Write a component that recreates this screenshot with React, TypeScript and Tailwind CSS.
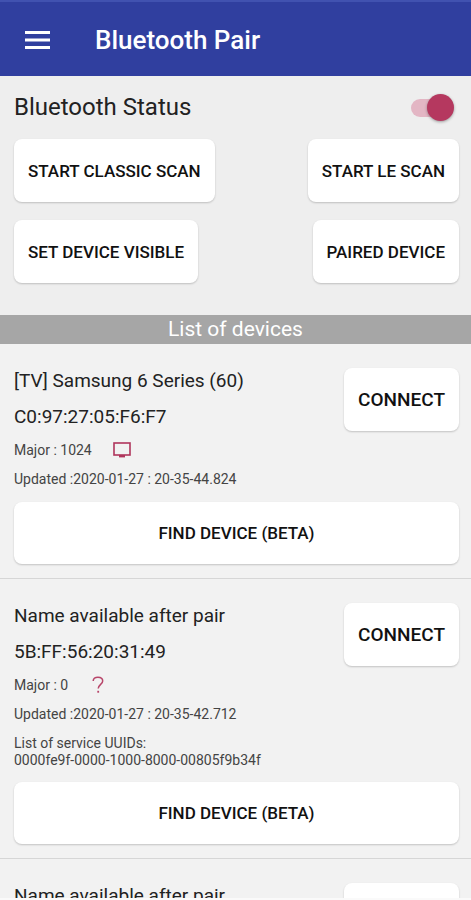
import { useState } from 'react'

type Kind = 'tv' | 'unknown'

interface Device {
  id: number
  name: string
  address: string
  major: number
  kind: Kind
  updated: string
  uuids?: string[]
}

const DEVICES: Device[] = [
  {
    id: 1,
    name: '[TV] Samsung 6 Series (60)',
    address: 'C0:97:27:05:F6:F7',
    major: 1024,
    kind: 'tv',
    updated: '2020-01-27 : 20-35-44.824',
  },
  {
    id: 2,
    name: 'Name available after pair',
    address: '5B:FF:56:20:31:49',
    major: 0,
    kind: 'unknown',
    updated: '2020-01-27 : 20-35-42.712',
    uuids: ['0000fe9f-0000-1000-8000-00805f9b34f'],
  },
  {
    id: 3,
    name: 'Name available after pair',
    address: '6A:1C:0E:42:9D:B3',
    major: 0,
    kind: 'unknown',
    updated: '2020-01-27 : 20-35-41.305',
  },
]

const BUTTON = 'pt-0.5 rounded-lg bg-white text-[#111] font-medium shadow-[0_1px_2px_rgba(0,0,0,0.2)] active:bg-gray-100'

function KindIcon({ kind }: { kind: Kind }) {
  if (kind === 'tv') {
    return (
      <svg viewBox="0 0 18 16" className="w-[18px] h-4" fill="none" aria-label="TV">
        <rect x="1" y="1" width="16" height="12" stroke="#b0355c" strokeWidth="1.6" />
        <path d="M6 13h6v2.4H6z" fill="#b0355c" />
      </svg>
    )
  }
  return (
    <svg viewBox="0 0 12 18" className="w-3 h-[18px]" fill="none" aria-label="Unknown">
      <path
        d="M1.2 5C1.2 2.6 3.2 1.2 5.9 1.2c2.8 0 4.8 1.5 4.8 3.8 0 3.2-4.5 3.6-4.5 7.6"
        stroke="#b8466a"
        strokeWidth="1.5"
      />
      <path d="M5.3 14.8h1.8v1.9H5.3z" fill="#b8466a" />
    </svg>
  )
}

function DeviceItem({ device }: { device: Device }) {
  return (
    <li className="pl-[14px] pr-3 pt-[19px] pb-[14px] border-b border-[#d6d6d6]">
      <div className="flex items-start justify-between">
        <div className="text-sm leading-[30px] text-[#444]">
          <p className="text-[19px] leading-[36px] text-[#222]">{device.name}</p>
          <p className="text-[19px] leading-[36px] text-[#222]">{device.address}</p>
          <div className="flex items-center gap-[18px] leading-[30px]">
            <span>Major : {device.major}</span>
            <span className="flex w-6 justify-center">
              <KindIcon kind={device.kind} />
            </span>
          </div>
          <p className="leading-[29px]">Updated :{device.updated}</p>
          {device.uuids && (
            <div className="mt-[6px] mb-[5px] leading-[17px]">
              <p>List of service UUIDs:</p>
              {device.uuids.map(u => <p key={u}>{u}</p>)}
            </div>
          )}
        </div>
        <button className={`${BUTTON} mt-[5px] h-[63px] px-[14px] text-[19px]`}>CONNECT</button>
      </div>
      <button className={`${BUTTON} mt-2 h-[62px] w-full text-[17px]`}>FIND DEVICE (BETA)</button>
    </li>
  )
}

export default function App() {
  const [enabled, setEnabled] = useState(true)

  return (
    <div className="h-screen flex flex-col overflow-hidden bg-[#f2f2f2] border-b-2 border-[#fafafa] font-[Roboto,sans-serif]">
      <header className="h-[76px] shrink-0 flex items-center gap-[45px] px-[25px] pt-[2px] bg-[#303f9f] border-t-2 border-[#4152b0] text-white">
        <button aria-label="Open menu">
          <svg viewBox="0 0 25 18" className="w-[25px] h-[18px]" fill="currentColor">
            <path d="M0 0h25v3H0zM0 7.5h25v3H0zM0 15h25v3H0z" />
          </svg>
        </button>
        <h1 className="text-[26px] font-medium">Bluetooth Pair</h1>
      </header>

      <section className="shrink-0 bg-[#eeeeee] pl-[14px] pr-3 pb-8">
        <div className="h-[63px] flex items-center justify-between pr-[5px]">
          <label htmlFor="status" className="pb-0.5 text-2xl text-[#222]">Bluetooth Status</label>
          <span className="relative flex items-center w-[43px] h-[27px]">
            <input
              id="status"
              type="checkbox"
              role="switch"
              checked={enabled}
              onChange={e => setEnabled(e.target.checked)}
              className="peer appearance-none w-10 h-[18px] rounded-full bg-gray-300 checked:bg-[#e3b6c4] cursor-pointer"
            />
            {/* thumb */}
            <span className="absolute left-0 peer-checked:left-4 size-[27px] rounded-full bg-white peer-checked:bg-[#b5385f] shadow-[0_1px_3px_rgba(0,0,0,0.35)] pointer-events-none" />
          </span>
        </div>
        <div className="flex flex-col gap-[18px]">
          <div className="flex justify-between">
            <button className={`${BUTTON} h-[63px] px-[14px] text-[17px]`}>START CLASSIC SCAN</button>
            <button className={`${BUTTON} h-[63px] px-[14px] text-[17px]`}>START LE SCAN</button>
          </div>
          <div className="flex justify-between">
            <button className={`${BUTTON} h-[63px] px-[14px] text-[17px]`}>SET DEVICE VISIBLE</button>
            <button className={`${BUTTON} h-[63px] px-[14px] text-[17px]`}>PAIRED DEVICE</button>
          </div>
        </div>
      </section>

      <h2 className="shrink-0 bg-[#a6a6a6] text-white text-center text-[21px] leading-[29px]">List of devices</h2>

      <ul className="flex-1 min-h-0 overflow-hidden">
        {DEVICES.map(d => <DeviceItem key={d.id} device={d} />)}
      </ul>
    </div>
  )
}
